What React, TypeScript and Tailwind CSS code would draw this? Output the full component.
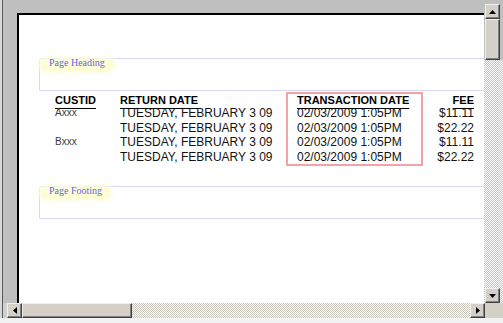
import React from 'react';

const checker =
  'bg-[repeating-conic-gradient(#c8c4bc_0_25%,#ffffff_0_50%)] bg-[length:2px_2px]';

const btn =
  'w-[15px] h-[15px] bg-[#d4d0c8] border-t border-l border-t-[#efefef] border-l-[#efefef] border-r border-b border-r-[#404040] border-b-[#404040] shadow-[inset_-1px_-1px_#808080] flex items-center justify-center';

const Arrow = ({ dir }: { dir: 'up' | 'down' | 'left' | 'right' }) => {
  const pts = {
    up: '0,4 7,4 3.5,0',
    down: '0,0 7,0 3.5,4',
    left: '4,0 4,7 0,3.5',
    right: '0,0 0,7 4,3.5',
  }[dir];
  const vertical = dir === 'up' || dir === 'down';
  return (
    <svg width={vertical ? 7 : 4} height={vertical ? 4 : 7} viewBox={vertical ? '0 0 7 4' : '0 0 4 7'}>
      <polygon points={pts} fill="#000" />
    </svg>
  );
};

const BandBox = ({ label }: { label: string }) => (
  <div className="w-[470px] h-[33px] border border-[#d6d6f4] rounded-tl-[3px] pl-[1px] shrink-0">
    <span className="block w-fit h-[12px] px-[8px] rounded-[4px] bg-[#fdfdd6] shadow-[0_0_4px_2px_#fdfde4] font-['Liberation_Serif',serif] text-[10px] leading-[8px] text-[#6a62f0]">
      {label}
    </span>
  </div>
);

const rows = [
  { id: 'Axxx', fee: '$11.11' },
  { id: '', fee: '$22.22' },
  { id: 'Bxxx', fee: '$11.11' },
  { id: '', fee: '$22.22' },
];

const head = 'h-[12px] text-[11px] leading-[12px] font-bold text-black underline underline-offset-[4px] decoration-1 whitespace-nowrap';
const cell = 'h-[14.5px] text-[12px] leading-[14.5px] text-[#111] whitespace-nowrap';

export default function App() {
  return (
    <div className="w-[503px] h-[323px] bg-[#ececec] flex flex-col overflow-hidden font-['Liberation_Sans',Arial,sans-serif]">
      <div className="flex h-[303px] shrink-0">
        {/* left frame edge */}
        <div className="w-[2px] bg-[#d8d8d8]" />
        <div className="w-[1px] bg-[#5a5a5a]" />

        {/* grey surround + page */}
        <div className="flex-1 min-w-0 bg-[#bfbfbf] pt-[13px] pl-[14px] flex">
          <div className="flex-1 min-w-0 bg-white border-t-2 border-l-2 border-black overflow-hidden">
            <div className="pl-[20px] pt-[43px] flex flex-col">
              <BandBox label="Page Heading" />

              {/* table */}
              <div className="mt-[1px] ml-[16px] flex items-start">
                <div className="w-[65px] pt-[2px] flex flex-col">
                  <div className={head}>CUSTID</div>
                  {rows.map((r, i) => (
                    <div key={i} className="h-[14.5px] text-[10px] leading-[14.5px] text-[#3a3a3a]">
                      {r.id}
                    </div>
                  ))}
                </div>
                <div className="w-[166px] pt-[2px] flex flex-col">
                  <div className={head}>RETURN DATE</div>
                  {rows.map((_, i) => (
                    <div key={i} className={cell}>TUESDAY, FEBRUARY 3 09</div>
                  ))}
                </div>
                <div className="w-[137px] border-2 border-[#f3a2a6] pl-[9px] flex flex-col">
                  <div className={head}>TRANSACTION DATE</div>
                  {rows.map((_, i) => (
                    <div key={i} className={cell}>02/03/2009 1:05PM</div>
                  ))}
                </div>
                <div className="w-[51px] pt-[2px] flex flex-col items-end">
                  <div className={head}>FEE</div>
                  {rows.map((r, i) => (
                    <div key={i} className={cell}>{r.fee}</div>
                  ))}
                </div>
              </div>

              <div className="mt-[20px]">
                <BandBox label="Page Footing" />
              </div>
            </div>
          </div>
        </div>

        {/* vertical scrollbar */}
        <div className={`w-[19px] flex flex-col ${checker}`}>
          <div className="h-[4px] bg-[#bfbfbf]" />
          <div className="pl-[1px] pr-[3px] bg-[#bfbfbf]">
            <div className={btn}><Arrow dir="up" /></div>
          </div>
          <div className="pl-[1px] pr-[3px] bg-[#bfbfbf]">
            <div className="w-[15px] h-[41px] bg-[#d4d0c8] border-t border-l border-t-[#efefef] border-l-[#efefef] border-r border-b border-r-[#404040] border-b-[#404040] shadow-[inset_-1px_-1px_#808080]" />
          </div>
          <div className="flex-1" />
          <div className="pl-[1px] pr-[3px]">
            <div className={btn}><Arrow dir="down" /></div>
          </div>
        </div>
      </div>

      {/* horizontal scrollbar */}
      <div className="flex h-[15px] shrink-0">
        <div className="w-[2px] bg-[#d8d8d8]" />
        <div className="w-[1px] bg-[#5a5a5a]" />
        <div className="w-[4px] bg-[#d0d0d0]" />
        <div className={btn}><Arrow dir="left" /></div>
        <div className="w-[110px] h-[15px] bg-[#d4d0c8] border-t border-l border-t-[#efefef] border-l-[#efefef] border-r border-b border-r-[#404040] border-b-[#404040] shadow-[inset_-1px_-1px_#808080]" />
        <div className={`flex-1 ${checker}`} />
        <div className={btn}><Arrow dir="right" /></div>
        <div className="w-[18px] bg-[#d4d0c8]" />
      </div>
      <div className="flex-1 bg-[#f2f2f2]" />
    </div>
  );
}
